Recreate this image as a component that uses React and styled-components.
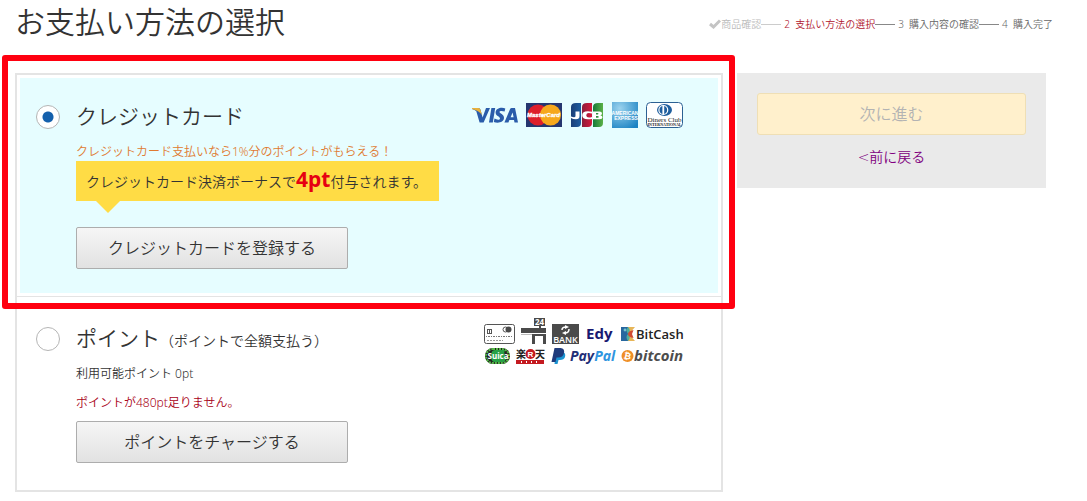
import React from 'react'
import styled, { createGlobalStyle } from 'styled-components';


class App extends React.Component {

    constructor(props){
        super(props)
        this.state = {
            method: 'card'
        }
    }

    handleSelect = (e) => {this.setState({method: e.target.value})}

    render() {
        const {method} = this.state
        return (
            <StyledPage>
                <GlobalStyle/>
                <StyledHeader>
                    <h1>お支払い方法の選択</h1>
                    <StyledSteps>
                        <StyledStep $state="done"><CheckIcon/>商品確認</StyledStep>
                        <StyledStep $state="current">2&nbsp; 支払い方法の選択</StyledStep>
                        <StyledStep>3&nbsp; 購入内容の確認</StyledStep>
                        <StyledStep>4&nbsp; 購入完了</StyledStep>
                    </StyledSteps>
                </StyledHeader>
                <StyledColumns>
                    <StyledMethods>
                        <StyledOption>
                            <StyledOptionInner $selected={method === 'card'}>
                                <StyledRadio type="radio" name="method" id="method-card" value="card" checked={method === 'card'} onChange={this.handleSelect}/>
                                <div>
                                    <StyledTitle htmlFor="method-card">クレジットカード</StyledTitle>
                                    <StyledPromo>クレジットカード支払いなら1%分のポイントがもらえる！</StyledPromo>
                                    <StyledBonus>クレジットカード決済ボーナスで<strong>4pt</strong>付与されます。</StyledBonus>
                                    <StyledButton $top="26px" type="button">クレジットカードを登録する</StyledButton>
                                </div>
                                <CardLogos/>
                            </StyledOptionInner>
                            <StyledFrame/>
                        </StyledOption>
                        <StyledOption>
                            <StyledOptionInner $selected={method === 'point'}>
                                <StyledRadio type="radio" name="method" id="method-point" value="point" checked={method === 'point'} onChange={this.handleSelect}/>
                                <div>
                                    <StyledTitle htmlFor="method-point">ポイント<small>（ポイントで全額支払う）</small></StyledTitle>
                                    <StyledNote>利用可能ポイント 0pt</StyledNote>
                                    <StyledNote $error>ポイントが480pt足りません。</StyledNote>
                                    <StyledButton $top="9px" type="button">ポイントをチャージする</StyledButton>
                                </div>
                                <PointLogos/>
                            </StyledOptionInner>
                        </StyledOption>
                    </StyledMethods>
                    <StyledSide>
                        <StyledNext type="button" disabled>次に進む</StyledNext>
                        <StyledBack href="#back"><span>&lt;</span>前に戻る</StyledBack>
                    </StyledSide>
                </StyledColumns>
            </StyledPage>
        )
    }
}

const CheckIcon = () => (
    <svg width="12" height="10" viewBox="0 0 12 10" aria-hidden="true">
        <path d="M1 5 L4.5 8 L11 1.5" fill="none" stroke="#c4c4c4" strokeWidth="3"/>
    </svg>
)

const CardLogos = () => (
    <StyledLogos>
        <StyledLogoRow $height="33px" $gap="8px">
            <svg width="46" height="26" viewBox="0 0 46 26" role="img" aria-label="VISA">
                <path d="M0 6 H6.5 Q8 6 8.4 7.6 L10.6 15.4 L14 6 H18 L11.6 20.5 H7.6 L4.3 9.2 Q3 7.8 0 7 Z" fill="#2a5caa"/>
                <path d="M0 6 H6.5 Q8 6 8.4 7.6 L10 13 Q7 8.5 0 7 Z" fill="#e9b13b"/>
                <path d="M19.4 6 H23.2 L20.8 20.5 H17 Z" fill="#2a5caa"/>
                <path d="M33.3 6.5 L32.6 9.6 C30.5 8.6 27.5 8.6 27.5 10 C27.5 11.5 32 12 32 15.8 C32 20.6 25.6 21.6 21.8 19.9 L22.5 16.6 C25 18 28 18 28 16.4 C28 14.6 23.6 14.2 23.6 10.6 C23.6 6.2 29.6 4.9 33.3 6.5 Z" fill="#2a5caa"/>
                <path fillRule="evenodd" d="M39.6 6 H43 L46 20.5 H42.5 L42 18 H37.4 L36.4 20.5 H32.4 L38 7.2 Q38.5 6 39.6 6 Z M40.6 10.4 L38.6 15.3 H41.6 Z" fill="#2a5caa"/>
            </svg>
            <svg width="37" height="26" viewBox="0 0 37 26" role="img" aria-label="MasterCard">
                <rect y="1" width="36" height="24" fill="#25366f"/>
                <circle cx="12" cy="13" r="10.5" fill="#dd1f2b"/>
                <circle cx="24.5" cy="13" r="10.5" fill="#f6a81c"/>
                <text x="17.5" y="15" fontFamily="Liberation Sans" fontSize="6" fontWeight="bold" fontStyle="italic" textAnchor="middle" fill="#fff" stroke="#fff" strokeWidth="0.3">MasterCard</text>
            </svg>
            <svg width="33" height="26" viewBox="0 0 33 26" role="img" aria-label="JCB">
                <defs>
                    <linearGradient id="jcbBlue"><stop offset="0" stopColor="#1b3f78"/><stop offset="1" stopColor="#1d5da0"/></linearGradient>
                    <linearGradient id="jcbRed"><stop offset="0" stopColor="#8b1f3b"/><stop offset="1" stopColor="#d7193c"/></linearGradient>
                    <linearGradient id="jcbGreen"><stop offset="0" stopColor="#16793a"/><stop offset="1" stopColor="#5bb147"/></linearGradient>
                </defs>
                <path d="M5 1 H10 V21 Q10 25 6 25 H0 V5 Q0 1 5 1 Z" fill="url(#jcbBlue)"/>
                <path d="M16 1 H21 V21 Q21 25 17 25 H11 V5 Q11 1 16 1 Z" fill="url(#jcbRed)"/>
                <path d="M27 1 H32 V21 Q32 25 28 25 H22 V5 Q22 1 27 1 Z" fill="url(#jcbGreen)"/>
                <path d="M4.5 9.5 H8.5 V14 Q8.5 17.2 5 17.2 Q2 17.2 0 16 V14.6 Q4.5 16.2 4.5 14 Z" fill="#fff"/>
                <path d="M21 9.7 V11.6 Q15.5 9.8 15.2 13.3 Q15.5 16.6 21 15 V16.9 Q11.2 18.6 11.2 13.3 Q11.2 8 21 9.7 Z" fill="#fff"/>
                <path fillRule="evenodd" d="M22 9.5 H28.5 Q31 9.7 31 11.4 Q31 13 29.3 13.2 Q31.5 13.5 31.5 15.2 Q31.4 17 28.8 17.2 H22 Z M25 10.9 V12.5 H27 Q28 11.7 27 10.9 Z M25 14 V15.8 H27.2 Q28.4 14.9 27.2 14 Z" fill="#fff"/>
            </svg>
            <svg width="26" height="26" viewBox="0 0 26 26" role="img" aria-label="American Express">
                <defs>
                    <radialGradient id="amexBlue" cx="0.3" cy="0.25" r="0.9"><stop offset="0" stopColor="#9bd3ee"/><stop offset="1" stopColor="#1b83c3"/></radialGradient>
                </defs>
                <rect width="26" height="26" fill="url(#amexBlue)"/>
                <text x="13" y="13" fontFamily="Liberation Sans" fontSize="5" fontWeight="bold" textAnchor="middle" fill="#fff">AMERICAN</text>
                <text x="14" y="18" fontFamily="Liberation Sans" fontSize="5" fontWeight="bold" textAnchor="middle" fill="#fff">EXPRESS</text>
            </svg>
            <svg width="37" height="26" viewBox="0 0 37 26" role="img" aria-label="Diners Club International">
                <rect x="0.5" y="0.5" width="36" height="25" rx="4" fill="#fff" stroke="#2c6193"/>
                <ellipse cx="18.5" cy="8" rx="7.5" ry="6" fill="#1f5f9e"/>
                <circle cx="17.3" cy="8" r="5" fill="#fff"/>
                <path d="M16.4 4 A4.2 4.2 0 0 0 16.4 12 Z M18.2 4 A4.2 4.2 0 0 1 18.2 12 Z" fill="#1f5f9e"/>
                <text x="18.5" y="20" fontFamily="Liberation Serif" fontSize="7" textAnchor="middle" fill="#222">Diners Club</text>
                <text x="18.5" y="24" fontFamily="Liberation Serif" fontSize="4" fontWeight="bold" textAnchor="middle" fill="#222">INTERNATIONAL</text>
            </svg>
        </StyledLogoRow>
    </StyledLogos>
)

const PointLogos = () => (
    <StyledLogos $indent="11px">
        <StyledLogoRow $height="28px" $gap="4px">
            <svg width="33" height="28" viewBox="0 0 33 28" role="img" aria-label="電子マネー">
                <rect x="1.5" y="7.5" width="30" height="19" rx="2" fill="#fff" stroke="#555"/>
                <rect x="4.5" y="12.5" width="4" height="4" fill="#fff" stroke="#555"/>
                <path d="M6.5 12 V17" stroke="#555"/>
                <circle cx="22.5" cy="12.5" r="2.5" fill="#fff" stroke="#555"/>
                <circle cx="25.5" cy="12.5" r="3" fill="#4a4a4a"/>
                <path d="M3 19.5 H29" stroke="#777" strokeDasharray="1 1 2 1"/>
                <path d="M4 23.5 H20" stroke="#999" strokeDasharray="2 1"/>
            </svg>
            <svg width="27" height="28" viewBox="0 0 27 28" role="img" aria-label="コンビニ">
                <rect x="14" y="1" width="11" height="8" fill="#4a4a4a"/>
                <text x="19.5" y="8" fontFamily="Open Sans" fontSize="8" fontWeight="bold" textAnchor="middle" fill="#fff">24</text>
                <rect x="19" y="9" width="2" height="2" fill="#4a4a4a"/>
                <path d="M1 11 H26 V16 H1 Z" fill="#4a4a4a"/>
                <path d="M12 17 H26 V27 H23 V19 H15 V27 H12 Z" fill="#4a4a4a"/>
                <path d="M1 17.5 H12" stroke="#bbb"/>
            </svg>
            <svg width="28" height="28" viewBox="0 0 28 28" role="img" aria-label="BANK">
                <rect x="1" y="7" width="27" height="20" fill="#4a4a4a"/>
                <path d="M11 13 Q11 10 15 10 M18 12 Q18 16 14 16" fill="none" stroke="#fff" strokeWidth="1.5"/>
                <path d="M14 8 L18 10 L14 12 Z M15 14 L11 16 L15 18 Z" fill="#fff"/>
                <text x="14.5" y="26" fontFamily="Open Sans" fontSize="9" fontWeight="600" textAnchor="middle" fill="#fff">BANK</text>
            </svg>
            <svg width="33" height="28" viewBox="0 0 33 28" role="img" aria-label="Edy">
                <text x="3" y="22" fontFamily="Open Sans" fontSize="15" fontWeight="bold" fill="#191970">Edy</text>
            </svg>
            <svg width="66" height="28" viewBox="0 0 66 28" role="img" aria-label="BitCash">
                <rect x="1" y="10" width="7" height="14" fill="#27679f"/>
                <path d="M8 10 H15 L9 17 L15 24 H8 Z" fill="#e7b557"/>
                <path d="M15 12 L15 22 L9 17 Z" fill="#fff"/>
                <path d="M8 10 Q5 13 8 17 Q5 20 8 24 Q11 21 9 17 Q11 13 8 10 Z" fill="#4fae9d"/>
                <path d="M13.5 13 Q8 14 8 17 Q8 20 13.5 21 L12 17 Z" fill="#d14b32"/>
                <circle cx="5" cy="13" r="1.4" fill="#77c3cf"/>
                <text x="16" y="22" fontFamily="Open Sans" fontSize="13" fontWeight="600" fill="#222">BitCash</text>
            </svg>
        </StyledLogoRow>
        <StyledLogoRow $height="21px" $gap="4px">
            <svg width="27" height="20" viewBox="0 0 27 20" role="img" aria-label="Suica">
                <rect x="2" y="2" width="25" height="16" rx="8" fill="#222"/>
                <rect x="3" y="3" width="23" height="14" rx="7" fill="none" stroke="#55b947" strokeWidth="2" strokeDasharray="2 1"/>
                <path d="M8 10 Q8 4 12 4 H22 Q20 8 24 12 L21 16 H12 Q8 16 8 10 Z" fill="#27a045"/>
                <text x="15" y="13" fontFamily="Open Sans" fontSize="8" fontWeight="bold" textAnchor="middle" fill="#fff">Suica</text>
            </svg>
            <svg width="33" height="20" viewBox="0 0 33 20" role="img" aria-label="楽天Edy">
                <text x="2" y="12" fontFamily="Noto Sans CJK JP" fontSize="10" fontWeight="bold" fill="#222">楽</text>
                <circle cx="16.5" cy="8" r="5" fill="#c41a20"/>
                <text x="16.5" y="11" fontFamily="Liberation Sans" fontSize="8" fontWeight="bold" textAnchor="middle" fill="#fff">R</text>
                <text x="21" y="12" fontFamily="Noto Sans CJK JP" fontSize="10" fontWeight="bold" fill="#222">天</text>
                <rect x="2" y="14" width="28" height="4" fill="#c41a20"/>
                <path d="M7 16 H26" stroke="#fff" strokeWidth="2" strokeDasharray="1 4"/>
            </svg>
            <svg width="65" height="20" viewBox="0 0 65 20" role="img" aria-label="PayPal">
                <path d="M5 6 H12 Q15 7 14 11 Q13 14 9 14 H7.5 L6.5 18 H3.5 Z" fill="#1c94d2"/>
                <path d="M3.5 2 H9.5 Q14 2.5 13 7 Q12 11.5 7 11.5 H5.5 L4.5 16 H0.5 Z" fill="#1f3b7c"/>
                <text x="19" y="15" fontFamily="Open Sans" fontSize="14" fontWeight="bold" fontStyle="italic" fill="#1f2f78">Pay<tspan fill="#2f95e0">Pal</tspan></text>
            </svg>
            <svg width="66" height="20" viewBox="0 0 66 20" role="img" aria-label="bitcoin">
                <circle cx="7.5" cy="10" r="6" fill="#ef8e25"/>
                <text x="7.5" y="13" fontFamily="Liberation Sans" fontSize="9" fontWeight="bold" textAnchor="middle" fill="#fff" transform="rotate(12 7.5 10)">₿</text>
                <text x="14" y="15" fontFamily="Open Sans" fontSize="15" fontWeight="bold" fontStyle="italic" fill="#4d4d4d">bitcoin</text>
            </svg>
        </StyledLogoRow>
    </StyledLogos>
)

const GlobalStyle = createGlobalStyle`
  * {
    box-sizing: border-box;
  }

  body {
    margin: 0;
    background: #fff;
    color: #333;
    font-family: "Noto Sans", "Noto Sans CJK JP", sans-serif;
    font-weight: 350;
  }

  button, input {
    font: inherit;
  }
`

const StyledPage = styled.div`
  padding: 0 34px 9px 15px;
`

const StyledHeader = styled.header`
  display: flex;
  justify-content: space-between;
  height: 73px;

  >h1 {
    margin: 0;
    font-size: 30px;
    font-weight: 350;
    line-height: 44px;
  }
`

const StyledSteps = styled.ol`
  display: flex;
  margin: 0;
  padding: 0;
  list-style: none;
  font-size: 10px;
  line-height: 48px;
  white-space: nowrap;
`

const stepColors = {
    done: '#bbb',
    current: '#b0122b'
}

const StyledStep = styled.li`
  display: flex;
  align-items: center;
  height: 48px;
  color: ${props => stepColors[props.$state] || '#666'};

  &:not(:last-child)::after {
    content: '';
    width: 20px;
    height: 1px;
    margin-right: 3px;
    background: ${props => props.$state === 'done' ? '#ccc' : '#888'};
  }
`

const StyledColumns = styled.div`
  display: grid;
  grid-template-columns: minmax(0, 1fr) 309px;
  align-items: start;
  gap: 14px;
  padding-right: 7px;
`

const StyledMethods = styled.main`
  border: 2px solid #e4e4e4;
`

const StyledOption = styled.section`
  position: relative;
  padding: 3px;

  & + & {
    border-top: 1px solid #e4e4e4;
  }
`

const StyledOptionInner = styled.div`
  display: grid;
  grid-template-columns: 24px 1fr auto;
  align-items: start;
  gap: 16px;
  padding: 17px 35px 24px 16px;
  background: ${props => props.$selected ? '#e6fdff' : '#fff'};
`

/* highlight around the recommended method */
const StyledFrame = styled.div`
  position: absolute;
  z-index: 1;
  top: -20px;
  right: -14px;
  bottom: -13px;
  left: -15px;
  border: 6px solid #ff0010;
  border-radius: 3px;
  pointer-events: none;
`

const StyledRadio = styled.input`
  appearance: none;
  width: 24px;
  height: 24px;
  margin: 10px 0 0;
  border: 1px solid #b5b5b5;
  border-radius: 50%;
  background: #fff;

  &:checked {
    background: radial-gradient(circle, #1460ac 5px, #fff 6px);
  }
`

const StyledTitle = styled.label`
  display: block;
  height: 30px;
  margin-top: 7px;
  font-size: 21px;
  line-height: 28px;
  white-space: nowrap;

  >small {
    font-size: 14px;
  }
`

const StyledPromo = styled.p`
  margin: 11px 0 0;
  color: #e07a30;
  font-size: 12px;
  line-height: 18px;
`

const StyledBonus = styled.p`
  position: relative;
  width: fit-content;
  height: 40px;
  margin: 0;
  padding: 0 12px 0 10px;
  background: #ffdc45;
  font-size: 14px;
  line-height: 42px;
  white-space: nowrap;

  >strong {
    color: #e60012;
    font-size: 21px;
    font-weight: 700;
    line-height: 1;
  }

  &::after {
    content: '';
    position: absolute;
    top: 100%;
    left: 20px;
    border: 12px solid transparent;
    border-top-color: #ffdc45;
    border-bottom: 0;
  }
`

const StyledNote = styled.p`
  margin: 11px 0 0;
  color: ${props => props.$error ? '#a80016' : '#333'};
  font-size: 12px;
  line-height: 18px;
`

const StyledButton = styled.button`
  display: block;
  width: 272px;
  height: 42px;
  margin-top: ${props => props.$top};
  padding-bottom: 4px;
  border: 1px solid #adadad;
  border-radius: 2px;
  background: linear-gradient(#f6f6f6, #e2e2e2);
  color: #333;
  font-size: 16px;
  cursor: pointer;
`

const StyledLogos = styled.div`
  display: grid;
  width: 211px;
  padding-left: ${props => props.$indent || 0};
`

const StyledLogoRow = styled.div`
  display: flex;
  align-items: flex-end;
  gap: ${props => props.$gap};
  height: ${props => props.$height};

  >svg {
    flex: none;
  }
`

const StyledSide = styled.aside`
  display: flex;
  flex-direction: column;
  align-items: center;
  gap: 12px;
  padding: 20px 20px 21px;
  background: #eaeaea;
`

const StyledNext = styled.button`
  width: 100%;
  height: 42px;
  padding-bottom: 4px;
  border: 1px solid #efdfb5;
  border-radius: 3px;
  background: #fff0cc;
  color: #b3b3b3;
  font-size: 16px;
`

const StyledBack = styled.a`
  color: #800080;
  font-size: 14px;
  line-height: 20px;
  text-decoration: none;

  >span {
    font-family: "DejaVu Sans", sans-serif;
  }
`

export default App
